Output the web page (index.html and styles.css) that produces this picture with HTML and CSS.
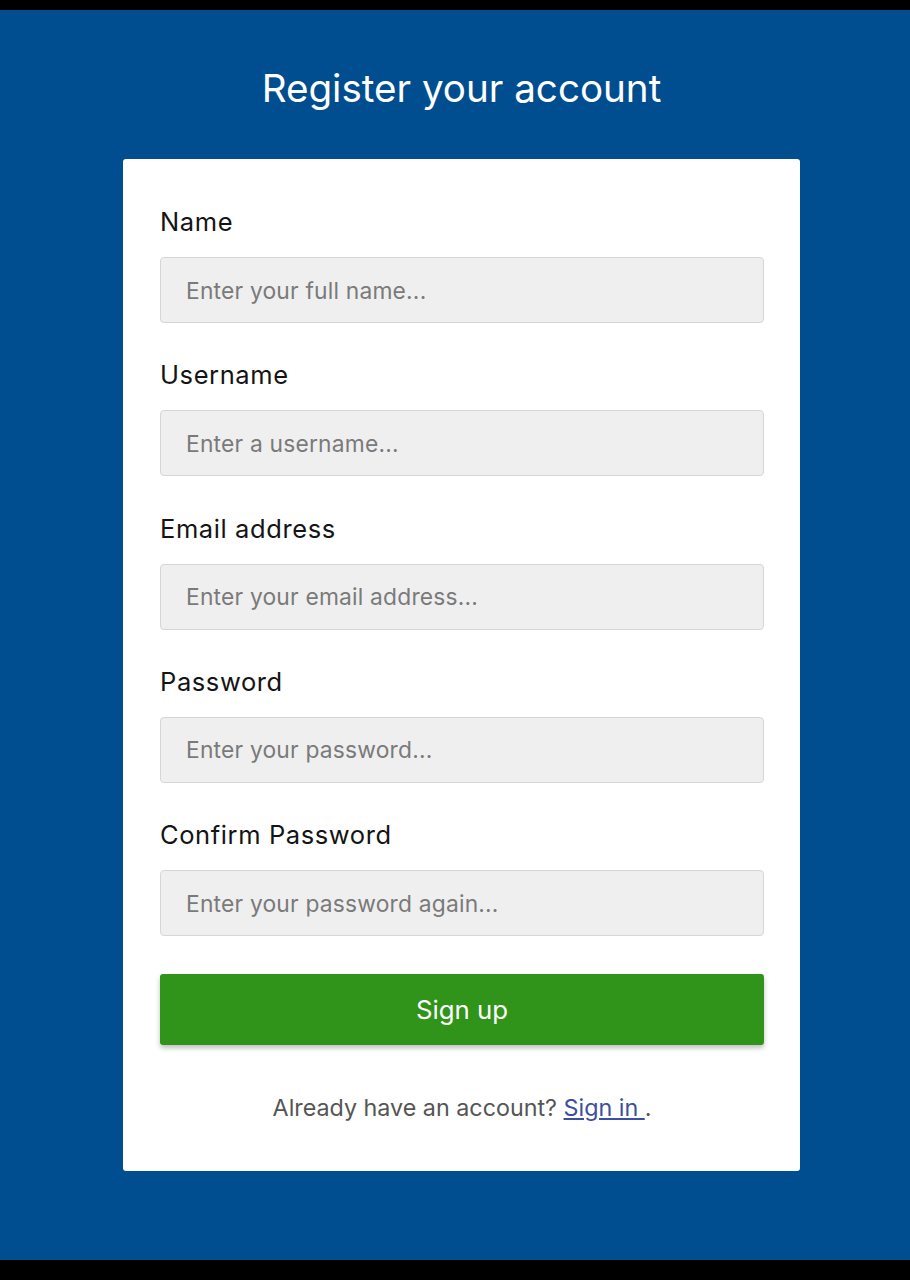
FILE: index.html
```html
<!DOCTYPE html>
<html lang="en">
<head>
<meta charset="utf-8">
<title>Register your account</title>
<link rel="stylesheet" href="styles.css">
</head>
<body>
<div class="screen">
  <h1 class="title">Register your account</h1>
  <form class="card">
    <div class="field">
      <label class="label" for="name">Name</label>
      <input class="input" id="name" type="text" placeholder="Enter your full name...">
    </div>
    <div class="field">
      <label class="label" for="username">Username</label>
      <input class="input" id="username" type="text" placeholder="Enter a username...">
    </div>
    <div class="field">
      <label class="label" for="email">Email address</label>
      <input class="input" id="email" type="email" placeholder="Enter your email address...">
    </div>
    <div class="field">
      <label class="label" for="password">Password</label>
      <input class="input" id="password" type="password" placeholder="Enter your password...">
    </div>
    <div class="field">
      <label class="label" for="confirm">Confirm Password</label>
      <input class="input" id="confirm" type="password" placeholder="Enter your password again...">
    </div>
    <button class="button" type="button">Sign up</button>
    <p class="footer">Already have an account? <a class="link" href="#">Sign in </a>.</p>
  </form>
</div>
</body>
</html>
```

FILE: styles.css
```css
* { box-sizing: border-box; }
html, body {
  margin: 0;
  padding: 0;
  background: #000;
}
body {
  font-family: "Inter", "Lato", "Liberation Sans", sans-serif;
  padding-top: 10px;
  height: 1280px;
}
.screen {
  height: 1250px;
  background: #004d8f;
  display: flex;
  flex-direction: column;
  align-items: center;
  padding-left: 13px;
  padding-top: 54px;
}
.title {
  margin: 0;
  color: #fff;
  font-weight: 400;
  font-size: 38.6px;
  line-height: 48px;
  height: 48px;
}
.card {
  margin-top: 47px;
  width: 677px;
  background: #fff;
  border-radius: 3px;
  padding: 48px 36px 49px 37px;
  display: flex;
  flex-direction: column;
}
.field {
  display: flex;
  flex-direction: column;
  gap: 20px;
  margin-bottom: 37.25px;
}
.field:last-of-type { margin-bottom: 38px; }
.label {
  font-size: 25.5px;
  line-height: 30px;
  letter-spacing: 0.6px;
  color: #141414;
}
.input {
  height: 66px;
  width: 100%;
  background: #efefef;
  border: 1px solid #d6d6d6;
  border-radius: 4px;
  padding: 0 25px;
  font-family: inherit;
  font-size: 22.8px;
  letter-spacing: 0.2px;
  color: #333;
  outline: none;
}
.input::placeholder { color: #7a7a7a; }
.button {
  height: 71px;
  width: 100%;
  border: none;
  border-radius: 3px;
  background: #2f9419;
  color: #fff;
  font-family: inherit;
  font-size: 25.8px;
  box-shadow: 0 3px 5px rgba(0, 0, 0, 0.25);
  cursor: pointer;
}
.footer {
  margin: 49px 0 0;
  text-align: center;
  font-size: 23.3px;
  line-height: 28px;
  color: #555;
}
.link {
  color: #3a4fa0;
  text-decoration: underline;
}
```
